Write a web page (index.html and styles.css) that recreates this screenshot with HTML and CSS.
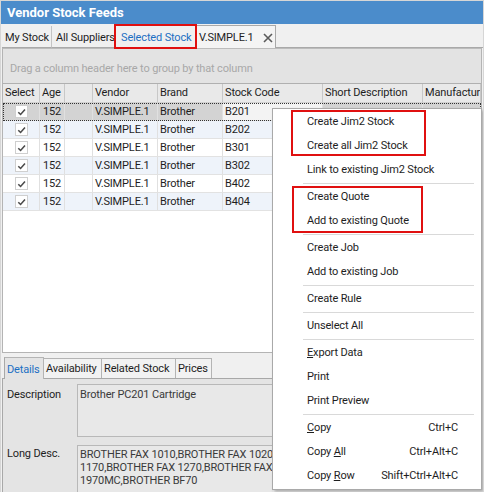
FILE: index.html
```html
<!DOCTYPE html>
<html>
<head>
<meta charset="utf-8">
<title>Vendor Stock Feeds</title>
<link rel="stylesheet" href="styles.css">
</head>
<body>
<div class="win">
  <div class="title">Vendor Stock Feeds</div>
  <div class="tabs">
    <div class="tab t1">My Stock</div>
    <div class="tab t2">All Suppliers</div>
    <div class="tab t3 hot">Selected Stock</div>
    <div class="tab t4 doc">V.SIMPLE.1<svg class="x" width="10" height="10" viewBox="0 0 10 10"><path d="M1 1L9 9M9 1L1 9" stroke="#5a5a5a" stroke-width="1.6" fill="none"/></svg></div>
    <div class="tabrest"></div>
  </div>
  <div class="grid">
    <div class="group">Drag a column header here to group by that column</div>
    <div class="table">
      <div class="row head">
        <div class="c">Select</div><div class="c">Age</div><div class="c"></div><div class="c">Vendor</div><div class="c">Brand</div><div class="c">Stock Code</div><div class="c">Short Description</div><div class="c">Manufacturer</div>
      </div>
      <div class="row sel">
        <div class="c chk"><span class="box"><svg width="12" height="12" viewBox="0 0 12 12"><path d="M2.5 6.2L5 8.7L9.8 3.3" stroke="#4a4a4a" stroke-width="1.7" fill="none"/></svg></span></div><div class="c num">152</div><div class="c"></div><div class="c">V.SIMPLE.1</div><div class="c">Brother</div><div class="c focus">B201</div><div class="c"></div><div class="c"></div>
      </div>
      <div class="row alt">
        <div class="c chk"><span class="box"><svg width="12" height="12" viewBox="0 0 12 12"><path d="M2.5 6.2L5 8.7L9.8 3.3" stroke="#4a4a4a" stroke-width="1.7" fill="none"/></svg></span></div><div class="c num">152</div><div class="c"></div><div class="c">V.SIMPLE.1</div><div class="c">Brother</div><div class="c">B202</div><div class="c"></div><div class="c"></div>
      </div>
      <div class="row">
        <div class="c chk"><span class="box"><svg width="12" height="12" viewBox="0 0 12 12"><path d="M2.5 6.2L5 8.7L9.8 3.3" stroke="#4a4a4a" stroke-width="1.7" fill="none"/></svg></span></div><div class="c num">152</div><div class="c"></div><div class="c">V.SIMPLE.1</div><div class="c">Brother</div><div class="c">B301</div><div class="c"></div><div class="c"></div>
      </div>
      <div class="row alt">
        <div class="c chk"><span class="box"><svg width="12" height="12" viewBox="0 0 12 12"><path d="M2.5 6.2L5 8.7L9.8 3.3" stroke="#4a4a4a" stroke-width="1.7" fill="none"/></svg></span></div><div class="c num">152</div><div class="c"></div><div class="c">V.SIMPLE.1</div><div class="c">Brother</div><div class="c">B302</div><div class="c"></div><div class="c"></div>
      </div>
      <div class="row">
        <div class="c chk"><span class="box"><svg width="12" height="12" viewBox="0 0 12 12"><path d="M2.5 6.2L5 8.7L9.8 3.3" stroke="#4a4a4a" stroke-width="1.7" fill="none"/></svg></span></div><div class="c num">152</div><div class="c"></div><div class="c">V.SIMPLE.1</div><div class="c">Brother</div><div class="c">B402</div><div class="c"></div><div class="c"></div>
      </div>
      <div class="row alt">
        <div class="c chk"><span class="box"><svg width="12" height="12" viewBox="0 0 12 12"><path d="M2.5 6.2L5 8.7L9.8 3.3" stroke="#4a4a4a" stroke-width="1.7" fill="none"/></svg></span></div><div class="c num">152</div><div class="c"></div><div class="c">V.SIMPLE.1</div><div class="c">Brother</div><div class="c">B404</div><div class="c"></div><div class="c"></div>
      </div>
    </div>
  </div>
  <div class="details">
    <div class="dtabs">
      <div class="dtab active">Details</div>
      <div class="dtab">Availability</div>
      <div class="dtab">Related Stock</div>
      <div class="dtab">Prices</div>
    </div>
    <div class="dpanel">
      <div class="lbl">Description</div>
      <div class="field desc">Brother PC201 Cartridge</div>
      <div class="lbl lbl2">Long Desc.</div>
      <div class="field long">BROTHER FAX 1010,BROTHER FAX 1020<br>1170,BROTHER FAX 1270,BROTHER FAX<br>1970MC,BROTHER BF70</div>
    </div>
  </div>

  <div class="menu">
    <div class="mi">Create Jim2 Stock</div>
    <div class="mi">Create all Jim2 Stock</div>
    <div class="mi">Link to existing Jim2 Stock</div>
    <div class="sep"></div>
    <div class="mi">Create Quote</div>
    <div class="mi">Add to existing Quote</div>
    <div class="sep"></div>
    <div class="mi">Create Job</div>
    <div class="mi">Add to existing Job</div>
    <div class="sep"></div>
    <div class="mi">Create Rule</div>
    <div class="sep"></div>
    <div class="mi">Unselect All</div>
    <div class="sep"></div>
    <div class="mi"><span><u>E</u>xport Data</span></div>
    <div class="mi">Print</div>
    <div class="mi">Print Preview</div>
    <div class="sep"></div>
    <div class="mi"><span><u>C</u>opy</span><span class="key">Ctrl+C</span></div>
    <div class="mi"><span>Copy <u>A</u>ll</span><span class="key">Ctrl+Alt+C</span></div>
    <div class="mi"><span>Copy <u>R</u>ow</span><span class="key">Shift+Ctrl+Alt+C</span></div>
  </div>

  <div class="mark m1"></div>
  <div class="mark m2"></div>
  <div class="mark m3"></div>
</div>
</body>
</html>
```

FILE: styles.css
```css
* { box-sizing: border-box; }
html, body { margin: 0; padding: 0; }
body {
  width: 484px;
  height: 492px;
  overflow: hidden;
  background: #f0f0f0;
  font-family: "Roboto", "Liberation Sans", sans-serif;
  font-size: 11px;
  letter-spacing: -0.15px;
  color: #1e1e1e;
}
.win {
  position: relative;
  width: 484px;
  height: 492px;
  border-top: 1px solid #d6d6d6;
  border-left: 1px solid #d6d6d6;
  border-right: 1px solid #d6d6d6;
  background: #f0f0f0;
  overflow: hidden;
}
.title {
  height: 23px;
  background: #4b8ccb;
  color: #fff;
  font-weight: bold;
  font-size: 13px;
  letter-spacing: 0;
  line-height: 23px;
  padding-left: 6px;
}
.tabs {
  display: flex;
  height: 24px;
  padding-left: 1px;
}
.tab {
  height: 22px;
  margin-top: 2px;
  line-height: 23px;
  white-space: nowrap;
  border-right: 1px solid #c4c4c4;
  border-bottom: 1px solid #a9a9a9;
}
.t1 { width: 50px; padding-left: 3px; }
.t2 { width: 64px; padding-left: 4px; }
.t3 { width: 79px; padding-left: 5px; border-right: none; }
.hot { color: #1c6fc3; }
.t4 {
  width: 81px;
  padding-left: 3px;
  border: 1px solid #a9a9a9;
  border-bottom: none;
  margin-top: 1px;
  height: 23px;
  background: #f4f4f4;
  display: flex;
  align-items: center;
  padding-top: 1px;
}
.t4 .x { margin-left: 9px; }
.tabrest {
  flex: 1;
  border-bottom: 1px solid #a9a9a9;
}
.grid {
  margin: 0 1px 0 1px;
  border: 1px solid #b4b4b4;
  border-top: 1px solid #bcbcbc;
  height: 305px;
  background: #fff;
}
.group {
  height: 35px;
  background: #e3e3e3;
  color: #a8a8a8;
  padding: 13px 0 0 7px;
  border-bottom: 1px solid #b0b0b0;
}
.row {
  display: grid;
  grid-template-columns: 37px 25px 28px 65px 65px 100px 100px 1fr;
  height: 18px;
  border-bottom: 1px solid #e2e2e2;
}
.row .c {
  border-right: 1px solid #e0e0e0;
  line-height: 17px;
  padding-left: 2px;
  white-space: nowrap;
  overflow: hidden;
}
.head {
  height: 19px;
  background: #e9e9e9;
  border-bottom: 1px solid #d0d0d0;
}
.head .c {
  border-right: 1px solid #c8c8c8;
  line-height: 18px;
}
.alt { background: #eef3fa; }
.sel {
  background: #d3d3d3;
  outline: 1px dotted #333;
  outline-offset: -1px;
}
.sel .focus { background: #f3f3f3; }
.c.num { text-align: right; padding-right: 3px; }
.c.chk {
  display: flex;
  justify-content: center;
  align-items: center;
  padding-left: 0;
}
.box {
  width: 13px;
  height: 13px;
  background: #fff;
  border: 1px solid #cfcfcf;
  display: flex;
  align-items: center;
  justify-content: center;
}
.details {
  margin: 3px 0 0 1px;
  width: 271px;
}
.dtabs {
  display: flex;
  align-items: flex-end;
  height: 22px;
  padding-left: 2px;
}
.dtab {
  height: 20px;
  line-height: 19px;
  padding: 0 2px;
  border: 1px solid #b4b4b4;
  border-bottom: none;
  border-left: none;
  background: #f2f2f2;
  white-space: nowrap;
}
.dtab.active {
  height: 22px;
  line-height: 23px;
  border-left: 1px solid #a8a8a8;
  background: #e4e4e4;
  color: #1c6fc3;
  width: 40px;
  padding-left: 2px;
  margin-bottom: -1px;
  position: relative;
}
.dtab:nth-child(2) { width: 58px; }
.dtab:nth-child(3) { width: 74px; }
.dtab:nth-child(4) { width: 36px; }
.dpanel {
  border-top: 1px solid #a8a8a8;
  border-left: 1px solid #a8a8a8;
  background: #e4e4e4;
  height: 120px;
  display: grid;
  grid-template-columns: 70px 1fr;
  grid-template-rows: 53px 1fr;
  row-gap: 8px;
  padding: 5px 0 0 4px;
}
.lbl { padding-top: 4px; line-height: 13px; }
.lbl2 { padding-top: 2px; }
.field {
  border: 1px solid #b8b8b8;
  border-right: none;
  background: #e8e8e8;
  color: #3a3a3a;
  white-space: nowrap;
  overflow: hidden;
  line-height: 13px;
  padding: 3px 0 0 2px;
}
.field.long { padding-top: 2px; }
.menu {
  position: absolute;
  left: 271px;
  top: 107px;
  width: 210px;
  background: #fff;
  border: 1px solid #a9a9a9;
  box-shadow: 2px 2px 3px rgba(0,0,0,0.28);
  padding: 1px 0;
}
.mi {
  height: 24px;
  line-height: 24px;
  padding-left: 34px;
  padding-right: 23px;
  display: flex;
  justify-content: space-between;
  white-space: nowrap;
}
.mi u { text-decoration: underline; text-underline-offset: 1px; }
.sep {
  height: 3px;
  margin: 0 7px 0 30px;
  position: relative;
}
.sep::after {
  content: "";
  position: absolute;
  left: 0; right: 0; top: 1px;
  height: 1px;
  background: #d9d9d9;
}
.mark {
  position: absolute;
  border: 2px solid #e01010;
}
.m1 { left: 290px; top: 109px; width: 135px; height: 46px; }
.m2 { left: 291px; top: 185px; width: 131px; height: 47px; }
.m3 { left: 113px; top: 23px; width: 83px; height: 25px; }
```
